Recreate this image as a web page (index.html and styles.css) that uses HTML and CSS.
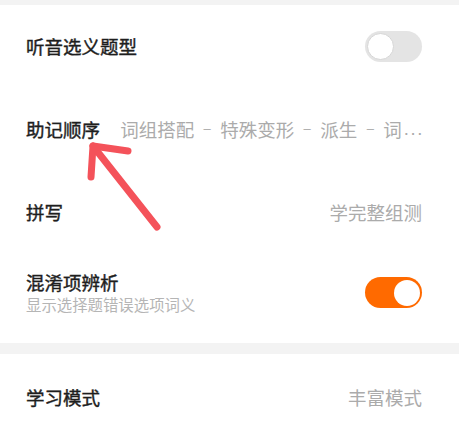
FILE: index.html
```html
<!DOCTYPE html>
<html lang="zh-CN">
<head>
<meta charset="utf-8">
<link rel="stylesheet" href="styles.css">
</head>
<body>
<div class="page">
  <div class="band band-top"></div>
  <div class="row">
    <span class="title">听音选义题型</span>
    <span class="switch"><span class="knob"></span></span>
  </div>
  <div class="row">
    <span class="title">助记顺序</span>
    <span class="value value-long">词组搭配<span class="sep">–</span>特殊变形<span class="sep">–</span>派生<span class="sep">–</span>词<span class="dots">...</span></span>
  </div>
  <div class="row">
    <span class="title">拼写</span>
    <span class="value">学完整组测</span>
  </div>
  <div class="row row-sub">
    <div class="stack">
      <span class="title">混淆项辨析</span>
      <span class="sub">显示选择题错误选项词义</span>
    </div>
    <span class="switch on"><span class="knob"></span></span>
  </div>
  <div class="band band-sep"></div>
  <div class="row row-last">
    <span class="title">学习模式</span>
    <span class="value">丰富模式</span>
  </div>
  <svg class="arrow" width="459" height="439" viewBox="0 0 459 439">
    <g fill="none" stroke="#f4525a" stroke-width="7" stroke-linecap="round" stroke-linejoin="round">
      <path d="M157 227 L93 146"/>
      <path d="M128 151 L93 146 L91 177"/>
    </g>
  </svg>
</div>
</body>
</html>
```
FILE: styles.css
```css
html, body {
  margin: 0;
  padding: 0;
  background: #ffffff;
}
.page {
  position: relative;
  width: 459px;
  height: 439px;
  overflow: hidden;
  font-family: "Noto Sans CJK SC", "Noto Sans", sans-serif;
}
.band {
  background: #f3f3f3;
}
.band-top {
  height: 5px;
}
.band-sep {
  height: 11px;
}
.row {
  height: 83px;
  display: flex;
  align-items: center;
  justify-content: space-between;
  padding: 0 37px 0 26px;
  box-sizing: border-box;
}
.row-sub {
  height: 89px;
  padding-bottom: 12px;
}
.row-last {
  height: 86px;
}
.title {
  font-size: 18.5px;
  font-weight: 400;
  color: #1e1e1e;
  -webkit-text-stroke: 0.4px #1e1e1e;
  line-height: 1;
  white-space: nowrap;
}
.value {
  font-size: 18.5px;
  color: #ababab;
  line-height: 1;
  white-space: nowrap;
}
.value-long {
  margin-left: 18px;
  display: flex;
  align-items: center;
}
.sep {
  display: inline-block;
  width: 26px;
  text-align: center;
  font-family: "Liberation Sans", sans-serif;
  font-size: 13px;
  line-height: 1;
  position: relative;
  top: -1px;
}
.dots {
  font-family: "Liberation Sans", sans-serif;
  font-size: 18.5px;
  letter-spacing: 1.6px;
  margin-left: 2px;
  margin-right: -2px;
  align-self: flex-end;
}
.stack {
  display: flex;
  flex-direction: column;
  gap: 6px;
}
.sub {
  font-size: 15.4px;
  color: #b5b5b5;
  line-height: 1;
  white-space: nowrap;
}
.switch {
  width: 57px;
  height: 31px;
  border-radius: 16px;
  background: #e4e4e4;
  display: flex;
  align-items: center;
  padding: 0 2px;
  box-sizing: border-box;
}
.knob {
  width: 27px;
  height: 27px;
  border-radius: 50%;
  background: #ffffff;
  box-sizing: border-box;
  border: 1px solid #d6d6d6;
}
.switch.on {
  background: #ff6a00;
  justify-content: flex-end;
}
.switch.on .knob {
  border: none;
  width: 26px;
  height: 26px;
}
.arrow {
  position: absolute;
  left: 0;
  top: 0;
  pointer-events: none;
}
```
